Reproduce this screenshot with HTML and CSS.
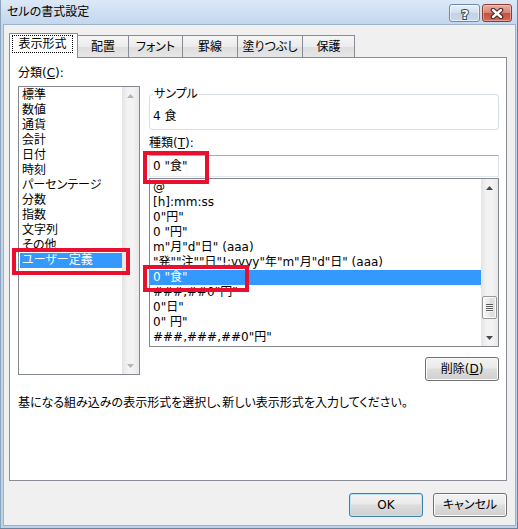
FILE: index.html
```html
<!DOCTYPE html>
<html lang="ja">
<head>
<meta charset="utf-8">
<title>セルの書式設定</title>
<link rel="stylesheet" href="styles.css">
</head>
<body>
<div class="window">
  <div class="titlebar">
    <span class="title">セルの書式設定</span>
    <div class="caption">
      <div class="cbtn help">
        <svg width="12" height="15" viewBox="0 0 12 15"><text x="6" y="12.5" text-anchor="middle" font-family="DejaVu Sans" font-weight="bold" font-size="13" fill="#fff" stroke="#33445a" stroke-width="2" paint-order="stroke">?</text></svg>
      </div>
      <div class="cbtn close">
        <svg width="14" height="11" viewBox="0 0 14 11"><path d="M3 2 L11 9 M11 2 L3 9" stroke="#4b2622" stroke-width="4.6" stroke-linecap="round" fill="none"/><path d="M3 2 L11 9 M11 2 L3 9" stroke="#fff" stroke-width="2.4" stroke-linecap="round" fill="none"/></svg>
      </div>
    </div>
  </div>
  <div class="client">
    <div class="tabs">
      <div class="tab active"><span class="focus">表示形式</span></div>
      <div class="tab w-haichi">配置</div>
      <div class="tab w-font">フォント</div>
      <div class="tab w-keisen">罫線</div>
      <div class="tab w-nuri">塗りつぶし</div>
      <div class="tab w-hogo">保護</div>
    </div>
    <div class="panel">
      <div class="cols">
        <div class="leftcol">
          <div class="label">分類(<u>C</u>):</div>
          <div class="listbox catlist">
            <ul class="items">
              <li>標準</li>
              <li>数値</li>
              <li>通貨</li>
              <li>会計</li>
              <li>日付</li>
              <li>時刻</li>
              <li>パーセンテージ</li>
              <li>分数</li>
              <li>指数</li>
              <li>文字列</li>
              <li>その他</li>
              <li class="sel mark-cat">ユーザー定義</li>
            </ul>
            <div class="vscroll off">
              <div class="arrow"><svg width="7" height="4" viewBox="0 0 7 4"><path d="M0 4 L3.5 0 L7 4 Z" fill="#b4b4b4"/></svg></div>
              <div class="track"></div>
              <div class="arrow"><svg width="7" height="4" viewBox="0 0 7 4"><path d="M0 0 L3.5 4 L7 0 Z" fill="#b4b4b4"/></svg></div>
            </div>
          </div>
        </div>
        <div class="rightcol">
          <fieldset class="sample">
            <legend>サンプル</legend>
            <div class="sample-val">4 食</div>
          </fieldset>
          <div class="label type-label">種類(<u>T</u>):</div>
          <div class="input mark-input">0 "食"</div>
          <div class="listbox fmtlist">
            <ul class="items">
              <li>@</li>
              <li>[h]:mm:ss</li>
              <li>0"円"</li>
              <li>0 "円"</li>
              <li>m"月"d"日" (aaa)</li>
              <li>"発""注""日"!:yyyy"年"m"月"d"日" (aaa)</li>
              <li class="sel mark-fmt">0 "食"</li>
              <li>###,##0"円"</li>
              <li>0"日"</li>
              <li>0" 円"</li>
              <li>###,###,##0"円"</li>
            </ul>
            <div class="vscroll on">
              <div class="arrow"><svg width="7" height="4" viewBox="0 0 7 4"><path d="M0 4 L3.5 0 L7 4 Z" fill="#4a4a4a"/></svg></div>
              <div class="track">
                <div class="thumb"><span class="grip"></span></div>
              </div>
              <div class="arrow"><svg width="7" height="4" viewBox="0 0 7 4"><path d="M0 0 L3.5 4 L7 0 Z" fill="#4a4a4a"/></svg></div>
            </div>
          </div>
          <div class="delrow"><button class="btn">削除(<u>D</u>)</button></div>
        </div>
      </div>
      <div class="desc">基になる組み込みの表示形式を選択し、新しい表示形式を入力してください。</div>
    </div>
    <div class="buttons">
      <button class="btn default">OK</button>
      <button class="btn">キャンセル</button>
    </div>
  </div>
</div>
</body>
</html>
```

FILE: styles.css
```css
*, *::before, *::after { box-sizing: border-box; }
html, body { margin: 0; padding: 0; }
body {
  width: 518px;
  height: 529px;
  overflow: hidden;
  font-family: "DejaVu Sans", "Noto Sans CJK JP", sans-serif;
  font-size: 12px;
  color: #000;
  font-feature-settings: "palt";
}

.window {
  width: 518px;
  height: 529px;
  display: flex;
  flex-direction: column;
  padding: 0 2px 3px 3px;
  background: linear-gradient(#dce8f6, #c3d7ee 24px, #bed2ea);
  box-shadow: inset -1px -1px 0 #6f829b, inset 1px 0 0 #8ea3bc;
}

.titlebar {
  height: 24px;
  flex: none;
  display: flex;
  align-items: center;
  padding-left: 4px;
}
.title { line-height: 16px; font-size: 12px; }
.caption {
  margin-left: auto;
  margin-right: 4px;
  align-self: flex-start;
  margin-top: 4px;
  display: flex;
  gap: 2px;
}
.cbtn {
  height: 18px;
  border-radius: 3px;
  display: flex;
  align-items: center;
  justify-content: center;
}
.cbtn.help {
  width: 31px;
  border: 1px solid #6f8aab;
  background: linear-gradient(#e9f0f8, #d3dfee 48%, #c2d3e7 52%, #c9d8ea);
  box-shadow: inset 0 0 0 1px rgba(255,255,255,0.55);
}
.cbtn.close {
  width: 30px;
  border: 1px solid #8b3b32;
  background: linear-gradient(#eaaea4, #d9837a 48%, #c7503f 52%, #d26a5a);
  box-shadow: inset 0 0 0 1px rgba(255,220,210,0.45);
}

.client {
  flex: 1;
  display: flex;
  flex-direction: column;
  border: 1px solid #9db1ca;
  background: #f0f0f0;
  padding: 8px 8px 0 5px;
}

/* tabs */
.tabs {
  height: 24px;
  flex: none;
  display: flex;
  align-items: flex-end;
}
.tab {
  height: 22px;
  border: 1px solid #898c95;
  border-bottom: none;
  margin-left: -1px;
  background: linear-gradient(#f5f5f5, #ececec 50%, #dedede 52%, #e6e6e6);
  display: flex;
  align-items: center;
  justify-content: center;
  line-height: 15px;
  padding-top: 1px;
}
.tab.active {
  width: 69px;
  height: 25px;
  margin-left: 0;
  margin-bottom: -1px;
  background: #fff;
  position: relative;
  z-index: 1;
  align-items: flex-start;
  justify-content: flex-start;
  padding: 1px 0 0 2px;
}
.focus {
  display: block;
  width: 61px;
  height: 18px;
  border: 1px dotted #000;
  text-align: center;
  line-height: 16px;
}
.w-haichi { width: 52px; }
.w-font { width: 55px; }
.w-keisen { width: 56px; }
.w-nuri { width: 66px; }
.w-hogo { width: 53px; }

/* panel */
.panel {
  height: 424px;
  flex: none;
  border: 1px solid #898c95;
  background: #fff;
  padding: 8px 7px 0 8px;
}
.cols {
  display: grid;
  grid-template-columns: 122px 350px;
  column-gap: 9px;
  align-items: start;
}
.label { line-height: 15px; height: 15px; white-space: nowrap; }
.leftcol .label { margin-bottom: 5px; }

.listbox {
  display: flex;
  border: 1px solid #828790;
  background: #fff;
}
.catlist { height: 289px; }
.fmtlist { height: 169px; margin-top: 1px; }

.items {
  list-style: none;
  margin: 0;
  flex: 1;
  min-width: 0;
}
.catlist .items { padding: 1px 0 0 1px; }
.fmtlist .items { padding: 1px 0 0 0; }
.items li {
  height: 15px;
  line-height: 15px;
  white-space: nowrap;
}
.catlist li { padding-left: 2px; }
.fmtlist li { padding-left: 3px; }
.items li.sel {
  background: #3399ff;
  color: #fff;
}

/* red annotation boxes */
.mark-cat, .mark-fmt, .mark-input { position: relative; }
.mark-cat::after, .mark-fmt::after, .mark-input::after {
  content: "";
  position: absolute;
  border: 4px solid #e8102e;
}
.mark-cat::after { left: -8px; top: -5px; width: 118px; height: 27px; }
.mark-fmt::after { left: -7px; top: -5px; width: 106px; height: 27px; }
.mark-input::after { left: -7px; top: -5px; width: 66px; height: 33px; }

/* scrollbars */
.vscroll {
  width: 17px;
  flex: none;
  display: flex;
  flex-direction: column;
  background: linear-gradient(to right, #e4e4e4, #f3f3f3 35%, #f3f3f3 65%, #e8e8e8);
}
.arrow {
  height: 17px;
  flex: none;
  display: flex;
  align-items: center;
  justify-content: center;
}
.track { flex: 1; }
.thumb {
  margin: 100px 1px 0 1px;
  height: 23px;
  border: 1px solid #979797;
  border-radius: 2px;
  background: linear-gradient(to right, #f6f6f6, #e9e9e9 50%, #dcdcdc 51%, #e2e2e2);
  box-shadow: inset 0 0 0 1px rgba(255,255,255,0.8);
  display: flex;
  align-items: center;
  justify-content: center;
}
.grip {
  display: block;
  width: 7px;
  height: 8px;
  background: repeating-linear-gradient(#5c5c5c 0 1px, #f4f4f4 1px 2px);
}

/* right column */
.sample {
  margin: 21px 0 0 0;
  padding: 7px 3px 5px 3px;
  border: 1px solid #d5dfe5;
  border-radius: 3px;
  min-width: 0;
}
.sample legend {
  padding: 0 1px;
  line-height: 15px;
  margin-left: 0;
}
.sample-val { line-height: 15px; height: 15px; }
.type-label { margin-top: 6px; }
.input {
  margin-top: 4px;
  height: 22px;
  border: 1px solid #e3e9ef;
  border-top-color: #abadb3;
  border-left-color: #e2e3ea;
  border-right-color: #dbdfe6;
  padding-left: 3px;
  line-height: 20px;
}
.delrow {
  margin-top: 10px;
  display: flex;
  justify-content: flex-end;
}

.desc {
  margin-top: 15px;
  line-height: 15px;
  white-space: nowrap;
}

/* buttons */
.btn {
  width: 74px;
  height: 24px;
  padding: 0;
  font-family: inherit;
  font-size: 12px;
  font-feature-settings: "palt";
  color: #000;
  border: 1px solid #707070;
  border-radius: 3px;
  background: linear-gradient(#f2f2f2, #ebebeb 45%, #dddddd 50%, #cfcfcf);
  box-shadow: inset 0 0 0 1px #fcfcfc;
  line-height: 20px;
}
.btn.default {
  border-color: #3c7fb1;
  box-shadow: inset 0 0 0 1px #b9e6f9;
}
.buttons {
  margin-top: 12px;
  display: flex;
  justify-content: flex-end;
  gap: 10px;
}
```
